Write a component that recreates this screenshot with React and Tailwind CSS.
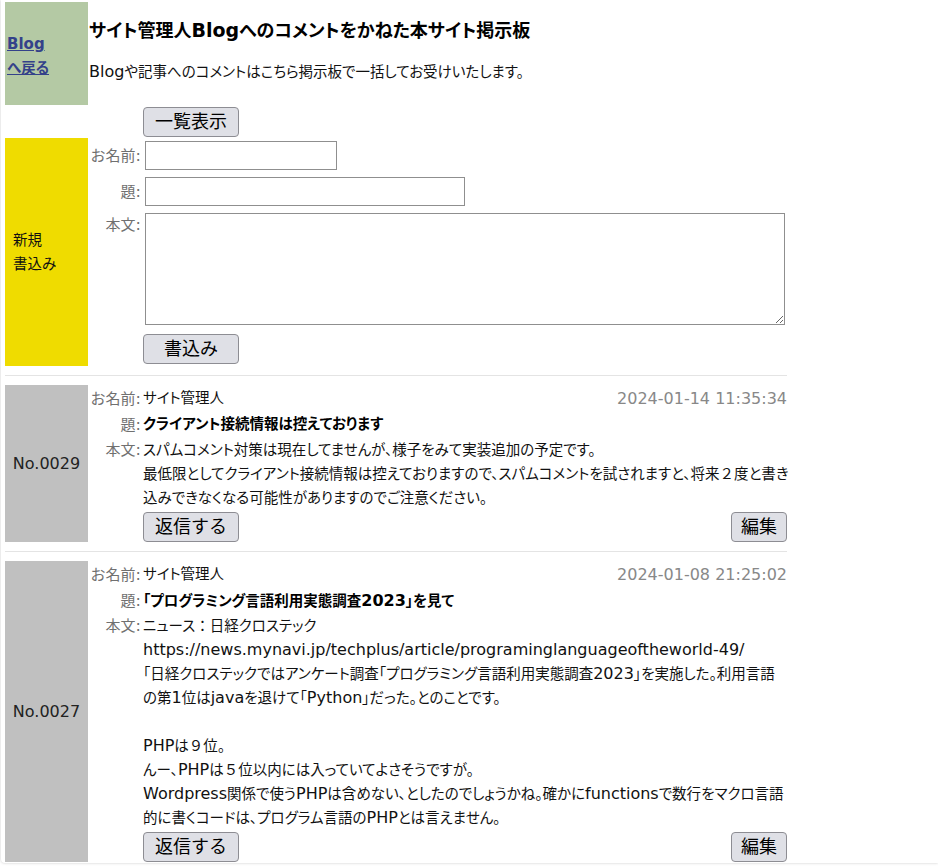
import React from 'react';

const font = "font-['DejaVu_Sans','Noto_Sans_CJK_JP',sans-serif] [font-feature-settings:'palt']";

/* bulletin board posts */
const posts = [
    {
        no: "No.0029",
        name: "サイト管理人",
        date: "2024-01-14 11:35:34",
        subject: "クライアント接続情報は控えております",
        body: [
            "スパムコメント対策は現在してませんが、様子をみて実装追加の予定です。",
            "最低限としてクライアント接続情報は控えておりますので、スパムコメントを試されますと、将来２度と書き",
            "込みできなくなる可能性がありますのでご注意ください。",
        ],
    },
    {
        no: "No.0027",
        name: "サイト管理人",
        date: "2024-01-08 21:25:02",
        subject: "「プログラミング言語利用実態調査2023」を見て",
        body: [
            "ニュース：日経クロステック",
            "https://news.mynavi.jp/techplus/article/programinglanguageoftheworld-49/",
            "「日経クロステックではアンケート調査「プログラミング言語利用実態調査2023」を実施した。利用言語",
            "の第1位はjavaを退けて「Python」だった。とのことです。",
            "",
            "PHPは９位。",
            "んー、PHPは５位以内には入っていてよさそうですが。",
            "Wordpress関係で使うPHPは含めない、としたのでしょうかね。確かにfunctionsで数行をマクロ言語",
            "的に書くコードは、プログラム言語のPHPとは言えません。",
        ],
    },
];

/* latin runs are set a bit larger (like Meiryo), fullwidth digits keep their width */
function Jp({ text, latin = "text-[16px]" }) {
    const parts = text.split(/([\x21-\x7e]+(?: [\x21-\x7e]+)*|[０-９：]+)/);
    return parts.map((p, i) => {
        if (!p) return null;
        if (/^[０-９：]/.test(p)) return <span key={i} className="[font-feature-settings:normal]">{p}</span>;
        if (/^[\x21-\x7e]/.test(p)) return <span key={i} className={latin}>{p}</span>;
        return <React.Fragment key={i}>{p}</React.Fragment>;
    });
}

function Button({ children, wide }) {
    return (
        <button className={"h-[30px] rounded-[4px] border border-[#8d8d93] bg-[#dfe0e6] text-[18px] leading-none text-black [font-feature-settings:normal] " + (wide ? "w-24" : "px-[9px]")}>
            {children}
        </button>
    );
}

function Label({ children }) {
    return (
        <div className="w-[53px] shrink-0 text-right text-[15px] text-[#707070] whitespace-nowrap [font-feature-settings:normal]">
            <Jp text={children} />
        </div>
    );
}

function Separator() {
    return <div className="my-[9px] border-t border-[#e4e4e4]"></div>;
}

function Post({ post }) {
    return (
        <div className="flex">
            <div className="w-[83px] shrink-0 bg-[#c0c0c0] flex items-center justify-center text-[16px] text-[#222]">
                {post.no}
            </div>
            <div className="flex-1 min-w-0 flex flex-col">
                <div className="flex items-center h-[27px]">
                    <Label>お名前:</Label>
                    <div className="ml-[2px] text-[14.5px] text-[#111]">{post.name}</div>
                    <div className="ml-auto text-[16px] text-[#888]">{post.date}</div>
                </div>
                <div className="flex items-center h-[26px]">
                    <Label>題:</Label>
                    <div className="ml-[2px] text-[14.5px] font-bold text-black"><Jp text={post.subject} /></div>
                </div>
                <div className="flex">
                    <div className="leading-[24px]"><Label>本文:</Label></div>
                    <div className="ml-[2px] min-w-0 text-[14.5px] leading-[24px] text-[#111]">
                        {post.body.map((line, idx) => (
                            <div key={idx} className="whitespace-nowrap h-[24px]"><Jp text={line} /></div>
                        ))}
                    </div>
                </div>
                <div className="flex justify-between mt-[2px] pl-[55px]">
                    <Button wide>返信する</Button>
                    <Button>編集</Button>
                </div>
            </div>
        </div>
    );
}

export default function App() {
    return (
        <div className={"bg-white min-h-[866px] " + font}>
            <div className="ml-[1px] pl-[4px] pt-[2px] pb-[1px] shadow-[0_0_3px_rgba(0,0,0,0.22)] rounded-bl-[4px]">
                <div className="w-[782px]">
                    {/* header */}
                    <div className="flex h-[103px]">
                        <div className="w-[83px] shrink-0 bg-[#b4c9a4] flex flex-col justify-center pl-[2px] pt-[5px] text-[15px] leading-[24px] font-bold">
                            <a href="#" className="text-[#34418a] underline w-fit">Blog</a>
                            <a href="#" className="text-[#34418a] underline w-fit text-[14.5px]">へ戻る</a>
                        </div>
                        <div className="pl-[1px] pt-[16px]">
                            <h1 className="text-[18px] leading-[24px] font-bold text-black">
                                <Jp text="サイト管理人Blogへのコメントをかねた本サイト掲示板" latin="text-[19px]" />
                            </h1>
                            <p className="mt-[17px] text-[14.5px] leading-[24px] text-[#111]">
                                <Jp text="Blogや記事へのコメントはこちら掲示板で一括してお受けいたします。" />
                            </p>
                        </div>
                    </div>
                    <div className="flex h-[33px]">
                        <div className="w-[83px] shrink-0"></div>
                        <div className="pl-[55px] pt-[2px]">
                            <Button wide>一覧表示</Button>
                        </div>
                    </div>
                    {/* new post form */}
                    <div className="flex">
                        <div className="w-[83px] shrink-0 bg-[#efdc00] flex flex-col justify-center pl-[8px] text-[14.5px] leading-[24px] text-[#111]">
                            <div>新規</div>
                            <div>書込み</div>
                        </div>
                        <div className="flex-1 min-w-0 flex flex-col pt-[3px] pb-[2px]">
                            <div className="flex items-center">
                                <Label>お名前:</Label>
                                <input type="text" className="ml-[4px] w-[192px] h-[29px] border border-[#8f8f8f] bg-white" />
                            </div>
                            <div className="flex items-center mt-[7px]">
                                <Label>題:</Label>
                                <input type="text" className="ml-[4px] w-[320px] h-[29px] border border-[#8f8f8f] bg-white" />
                            </div>
                            <div className="flex items-start mt-[7px]">
                                <div className="leading-[24px]"><Label>本文:</Label></div>
                                <textarea className="ml-[4px] w-[640px] h-[112px] border border-[#8f8f8f] bg-white"></textarea>
                            </div>
                            <div className="pl-[55px] mt-[9px]">
                                <Button wide>書込み</Button>
                            </div>
                        </div>
                    </div>
                    <Separator />
                    <Post post={posts[0]} />
                    <Separator />
                    <Post post={posts[1]} />
                </div>
            </div>
        </div>
    );
}
